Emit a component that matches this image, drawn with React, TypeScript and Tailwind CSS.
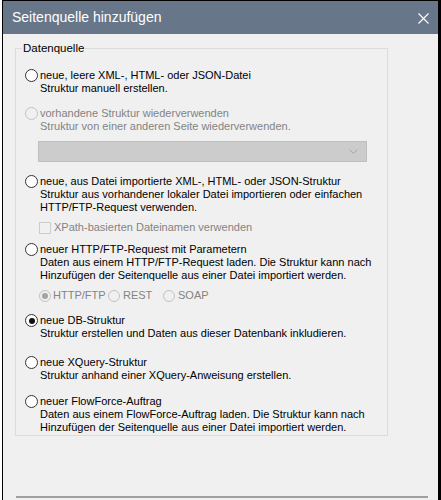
import React from "react";

type RadioProps = { checked?: boolean; disabled?: boolean; small?: boolean };

function Radio({ checked, disabled, small }: RadioProps) {
  const size = small ? "w-[12px] h-[12px]" : "w-[13px] h-[13px]";
  const ring = disabled ? "border-[#c2c2c2] bg-[#f0f0f0]" : "border-[#333333] bg-white";
  return (
    <span className={`${size} ${ring} shrink-0 rounded-full border flex items-center justify-center`}>
      {checked && (
        <span className={`${disabled ? "bg-[#a3a3a3]" : "bg-[#111111]"} w-[6px] h-[6px] rounded-full`} />
      )}
    </span>
  );
}

interface OptionProps {
  title: string;
  lines: string[];
  checked?: boolean;
  disabled?: boolean;
  className?: string;
}

function Option({ title, lines, checked, disabled, className }: OptionProps) {
  return (
    <div className={`flex gap-[2px] pl-[9px] ${className ?? ""}`}>
      <Radio checked={checked} disabled={disabled} />
      <div className={`flex flex-col ${disabled ? "text-[#838383]" : "text-black"}`}>
        <span>{title}</span>
        {lines.map((l, i) => (
          <span key={i}>{l}</span>
        ))}
      </div>
    </div>
  );
}

export default function App() {
  return (
    <div className="w-[441px] h-[500px] overflow-hidden bg-white font-['Liberation_Sans',Arial,sans-serif]">
      <div className="ml-[2px] w-[439px] h-[500px] flex flex-col border-l border-t border-r-[3px] border-black bg-[#f0f0f0]">
        {/* Title bar */}
        <div className="h-[33px] shrink-0 flex items-center justify-between bg-[#677689] pl-[9px] pr-[9px] text-white">
          <span className="text-[14px]">Seitenquelle hinzufügen</span>
          <svg width="11" height="11" viewBox="0 0 11 11" className="mt-[1px]">
            <path d="M0.5 0.5 L10.5 10.5 M10.5 0.5 L0.5 10.5" stroke="#ffffff" strokeWidth="1.1" />
          </svg>
        </div>

        {/* Body */}
        <div className="flex-1 flex flex-col text-[11px] leading-[13px]">
          <fieldset className="ml-[12px] mt-[7px] w-[373px] h-[395px] border border-[#dcdcdc]">
            <legend className="ml-[6px] px-[1px] text-[11.5px] leading-[14px] text-black">Datenquelle</legend>

            <Option
              className="mt-[14px]"
              title="neue, leere XML-, HTML- oder JSON-Datei"
              lines={["Struktur manuell erstellen."]}
            />
            <Option
              className="mt-[12px]"
              disabled
              title="vorhandene Struktur wiederverwenden"
              lines={["Struktur von einer anderen Seite wiederverwenden."]}
            />
            <div className="ml-[22px] mt-[8px] w-[329px] h-[21px] flex items-center justify-end pr-[8px] border border-[#bfbfbf] bg-[#cccccc]">
              <svg width="9" height="5" viewBox="0 0 9 5">
                <path d="M0.5 0.5 L4.5 4.5 L8.5 0.5" stroke="#a6a6a6" fill="none" strokeWidth="1" />
              </svg>
            </div>
            <Option
              className="mt-[13px]"
              title="neue, aus Datei importierte XML-, HTML- oder JSON-Struktur"
              lines={[
                "Struktur aus vorhandener lokaler Datei importieren oder einfachen",
                "HTTP/FTP-Request verwenden.",
              ]}
            />
            <div className="mt-[7px] ml-[23px] flex items-center gap-[3px] text-[#838383]">
              <span className="w-[12px] h-[12px] border border-[#cccccc] bg-[#f0f0f0]" />
              <span>XPath-basierten Dateinamen verwenden</span>
            </div>
            <Option
              className="mt-[9px]"
              title="neuer HTTP/FTP-Request mit Parametern"
              lines={[
                "Daten aus einem HTTP/FTP-Request laden. Die Struktur kann nach",
                "Hinzufügen der Seitenquelle aus einer Datei importiert werden.",
              ]}
            />
            <div className="mt-[7px] ml-[23px] flex items-center text-[#838383]">
              <div className="w-[69px] flex items-center gap-[2px]">
                <Radio small disabled checked />
                <span>HTTP/FTP</span>
              </div>
              <div className="w-[55px] flex items-center gap-[3px]">
                <Radio small disabled />
                <span>REST</span>
              </div>
              <div className="flex items-center gap-[3px]">
                <Radio small disabled />
                <span>SOAP</span>
              </div>
            </div>
            <Option
              className="mt-[12px]"
              checked
              title="neue DB-Struktur"
              lines={["Struktur erstellen und Daten aus dieser Datenbank inkludieren."]}
            />
            <Option
              className="mt-[16px]"
              title="neue XQuery-Struktur"
              lines={["Struktur anhand einer XQuery-Anweisung erstellen."]}
            />
            <Option
              className="mt-[13px]"
              title="neuer FlowForce-Auftrag"
              lines={[
                "Daten aus einem FlowForce-Auftrag laden. Die Struktur kann nach",
                "Hinzufügen der Seitenquelle aus einer Datei importiert werden.",
              ]}
            />
          </fieldset>

          <div className="mt-auto ml-[13px] w-[412px] h-[4px] border-t-2 border-[#a0a0a0]" />
        </div>
      </div>
    </div>
  );
}
